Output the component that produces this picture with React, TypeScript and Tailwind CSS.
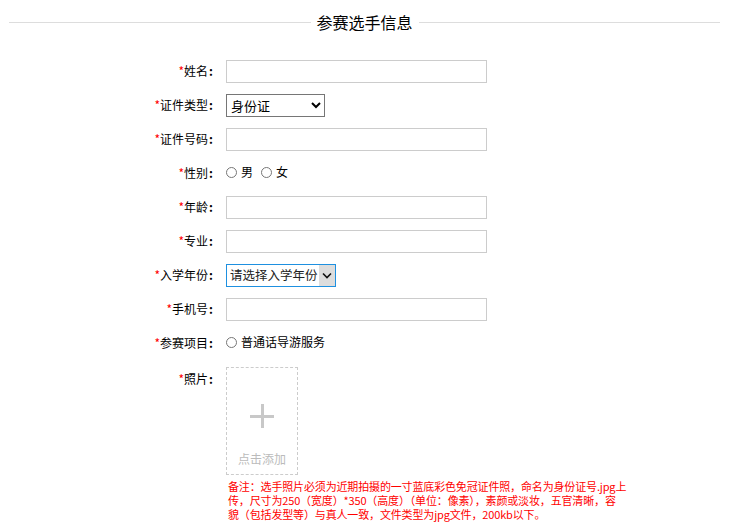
import React from 'react'

const font = { fontFamily: '"Noto Sans CJK SC", "Noto Sans", sans-serif' }

const Label = ({ text }: { text: string }) => (
  <div className="w-[213px] shrink-0 text-right text-[12px] text-black">
    <span className="text-[#ff0000]">*</span>
    {text}
    <span className="ml-[1px] font-bold">:</span>
  </div>
)

const Row = ({ label, children }: { label: string; children: React.ReactNode }) => (
  <div className="flex h-[34px] items-center">
    <Label text={label} />
    <div className="ml-[13px] flex items-center">{children}</div>
  </div>
)

const TextInput = () => <input type="text" className="h-[23px] w-[261px] border border-[#ccc] bg-white px-1 text-[12px] outline-none" />

const Radio = ({ label, name }: { label: string; name: string }) => (
  <label className="mr-[8px] flex items-center text-[12px] text-black">
    <input type="radio" name={name} className="m-0 mr-[4px] h-[11px] w-[11px] accent-gray-500" />
    {label}
  </label>
)

export default function App() {
  return (
    <div className="min-h-screen w-[747px] bg-white" style={font}>
      <div className="flex h-[54px] items-start px-[9px] pt-[12px]">
        <div className="mt-[10px] h-px flex-1 bg-[#ddd]" />
        <div className="px-[6px] text-[16px] leading-[20px] text-black">参赛选手信息</div>
        <div className="mt-[10px] h-px flex-1 bg-[#ddd]" />
        <div className="w-[18px]" />
      </div>

      <Row label="姓名"><TextInput /></Row>
      <Row label="证件类型">
        <select className="h-[23px] w-[99px] border border-[#767676] bg-white text-[13px] text-black">
          <option>身份证</option>
        </select>
      </Row>
      <Row label="证件号码"><TextInput /></Row>
      <Row label="性别">
        <div className="-mt-[2px] flex items-center">
          <Radio label="男" name="sex" />
          <Radio label="女" name="sex" />
        </div>
      </Row>
      <Row label="年龄"><TextInput /></Row>
      <Row label="专业"><TextInput /></Row>
      <Row label="入学年份">
        <div className="flex h-[23px] w-[110px] items-center overflow-hidden border border-[#1e90e0] bg-white">
          <span className="flex-1 whitespace-nowrap pl-[3px] text-[12.5px] leading-none text-[#222]">请选择入学年份</span>
          <span className="flex h-full w-[16px] shrink-0 items-center justify-center bg-[#ddd]">
            <svg width="10" height="7" viewBox="0 0 10 7">
              <path d="M1 1.5 L5 5.5 L9 1.5" fill="none" stroke="#111" strokeWidth="1.6" />
            </svg>
          </span>
        </div>
      </Row>
      <Row label="手机号"><TextInput /></Row>
      <Row label="参赛项目">
        <div className="-mt-[2px] flex items-center">
          <Radio label="普通话导游服务" name="item" />
        </div>
      </Row>

      <div className="flex pt-[7px]">
        <div className="pt-[3px] leading-[18px]">
          <Label text="照片" />
        </div>
        <div className="ml-[13px]">
          <div className="flex h-[108px] w-[72px] flex-col items-center border border-dashed border-[#ccc]">
            <div className="relative mt-[36px] h-[24px] w-[24px]">
              <div className="absolute left-[10.5px] top-0 h-[24px] w-[3px] bg-[#c8c8c8]" />
              <div className="absolute left-0 top-[10.5px] h-[3px] w-[24px] bg-[#c8c8c8]" />
            </div>
            <div className="mt-[22px] text-[12px] text-[#bbb]">点击添加</div>
          </div>
          <p className="mt-[4px] ml-[2px] whitespace-nowrap text-[11px] leading-[14px] tracking-[-0.15px] text-[#ff0000]">
            备注：选手照片必须为近期拍摄的一寸蓝底彩色免冠证件照，命名为身份证号.jpg上
            <br />
            传，尺寸为250（宽度）*350（高度）（单位：像素），素颜或淡妆，五官清晰，容
            <br />
            貌（包括发型等）与真人一致，文件类型为jpg文件，200kb以下。
          </p>
        </div>
      </div>
    </div>
  )
}
